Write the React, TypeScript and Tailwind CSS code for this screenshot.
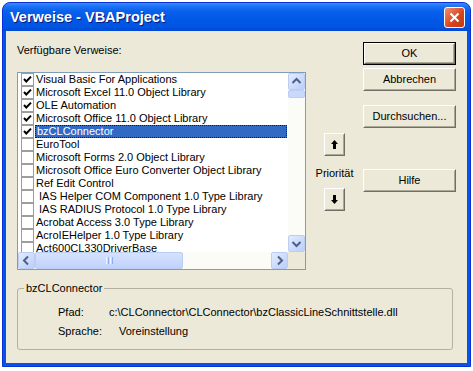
import type { ReactNode } from 'react';

const refs = [
  { label: 'Visual Basic For Applications', checked: true },
  { label: 'Microsoft Excel 11.0 Object Library', checked: true },
  { label: 'OLE Automation', checked: true },
  { label: 'Microsoft Office 11.0 Object Library', checked: true },
  { label: 'bzCLConnector', checked: true, selected: true },
  { label: 'EuroTool' },
  { label: 'Microsoft Forms 2.0 Object Library' },
  { label: 'Microsoft Office Euro Converter Object Library' },
  { label: 'Ref Edit Control' },
  { label: '\u00a0IAS Helper COM Component 1.0 Type Library' },
  { label: '\u00a0IAS RADIUS Protocol 1.0 Type Library' },
  { label: 'Acrobat Access 3.0 Type Library' },
  { label: 'AcroIEHelper 1.0 Type Library' },
  { label: 'Act600CL330DriverBase' },
];

function CheckBox({ checked }: { checked?: boolean }) {
  return (
    <span className="flex h-[13px] w-[13px] shrink-0 items-center justify-center border border-[#9D9D9D] bg-white">
      {checked && (
        <svg width="11" height="11" viewBox="0 0 11 11">
          <polyline points="2,5 4.3,7.5 9,2.6" fill="none" stroke="#000" strokeWidth="2" />
        </svg>
      )}
    </span>
  );
}

const arrows = {
  up: '4.5,10 8.5,6 12.5,10',
  down: '4.5,7 8.5,11 12.5,7',
  left: '10,4.5 6,8.5 10,12.5',
  right: '7,4.5 11,8.5 7,12.5',
};

function ScrollButton({ dir }: { dir: keyof typeof arrows }) {
  return (
    <div className="h-[17px] w-[17px] shrink-0 rounded-[2px] border border-[#BCCDF3] bg-[linear-gradient(135deg,#E3EBFF,#BACEFA)]">
      <svg width="15" height="15" viewBox="1 1 15 15">
        <polyline points={arrows[dir]} fill="none" stroke="#4D6185" strokeWidth="2" />
      </svg>
    </div>
  );
}

function Button({ children, isDefault }: { children: ReactNode; isDefault?: boolean }) {
  const face = (
    <div className="h-full border border-b-[#716F64] border-l-white border-r-[#716F64] border-t-white">
      <div className="flex h-full items-center justify-center border border-b-[#ACA899] border-l-[#ECE9D8] border-r-[#ACA899] border-t-[#ECE9D8]">
        {children}
      </div>
    </div>
  );
  return isDefault ? <div className="h-[23px] w-[93px] border border-black">{face}</div> : <div className="h-[23px] w-[93px]">{face}</div>;
}

function ArrowButton({ down }: { down?: boolean }) {
  return (
    <div className="h-[23px] w-[21px] border border-b-[#716F64] border-l-white border-r-[#716F64] border-t-white">
      <div className="flex h-full items-center justify-center border border-b-[#ACA899] border-l-[#ECE9D8] border-r-[#ACA899] border-t-[#ECE9D8]">
        <svg width="7" height="9" viewBox="0 0 7 9" className={down ? 'rotate-180' : ''}>
          <polygon points="3.5,0 7,4 5,4 5,9 2,9 2,4 0,4" fill="#000" />
        </svg>
      </div>
    </div>
  );
}

export default function App() {
  return (
    <div className="h-[371px] w-[473px] bg-white pl-[2px] pt-[2px] text-[11px] leading-[13px] text-black [font-family:'Liberation_Sans',Arial,sans-serif]">
      <div className="flex h-[365px] w-[469px] flex-col rounded-t-[8px] border border-[#0831D9] bg-[#0554E3]">
        {/* title bar */}
        <div className="flex h-[28px] shrink-0 items-center rounded-t-[7px] bg-[linear-gradient(to_bottom,#3A8EFB_0%,#1C72F4_12%,#0860EC_30%,#0058E7_60%,#0055E2_85%,#0049D4_100%)] pl-[7px] pr-[5px]">
          <span className="text-[14.5px] font-bold text-white [text-shadow:1px_1px_#0A1883]">Verweise - VBAProject</span>
          <div className="ml-auto flex h-[21px] w-[21px] items-center justify-center rounded-[3px] border border-white bg-[linear-gradient(135deg,#F0906E,#D8421B_60%,#C23A14)]">
            <svg width="11" height="11" viewBox="0 0 11 11">
              <path d="M1.5 1.5 L9.5 9.5 M9.5 1.5 L1.5 9.5" stroke="#fff" strokeWidth="2" />
            </svg>
          </div>
        </div>

        {/* client area */}
        <div className="mx-[3px] mb-[3px] flex flex-1 flex-col bg-[#ECE9D8] pl-[11px]">
          <div className="flex">
            <div className="w-[289px]">
              <div className="mt-[13px]">Verfügbare Verweise:</div>
              <div className="mt-[15px] flex h-[198px] flex-col border border-[#7F9DB9] bg-white">
                <div className="flex min-h-0 flex-1">
                  <div className="flex-1 overflow-hidden">
                    {refs.map((r) => (
                      <div key={r.label} className="flex h-[13px] items-center pl-[3px] pr-[1px]">
                        <CheckBox checked={r.checked} />
                        <span
                          className={`ml-[1px] flex h-[13px] flex-1 items-center whitespace-nowrap pl-[1px] ${
                            r.selected ? 'border border-dotted border-[#1A1A1A] bg-[#316AC5] text-white' : ''
                          }`}
                        >
                          {r.label}
                        </span>
                      </div>
                    ))}
                  </div>
                  <div className="flex w-[17px] flex-col bg-[#FBFBF8]">
                    <ScrollButton dir="up" />
                    <div className="h-[8px] rounded-[2px] border border-[#BCCDF3] bg-[#C9D8FC]" />
                    <div className="flex-1" />
                    <ScrollButton dir="down" />
                  </div>
                </div>
                <div className="flex h-[17px] bg-[#FBFBF8]">
                  <ScrollButton dir="left" />
                  <div className="flex w-[148px] items-center justify-center rounded-[2px] border border-[#BCCDF3] bg-[linear-gradient(to_bottom,#D6E2FE,#C0D2FB)]">
                    <div className="flex gap-[1px]">
                      <span className="h-[7px] w-[1px] bg-[#EEF4FE]" />
                      <span className="h-[7px] w-[1px] bg-[#8CB0F8]" />
                      <span className="h-[7px] w-[1px] bg-[#EEF4FE]" />
                      <span className="h-[7px] w-[1px] bg-[#8CB0F8]" />
                    </div>
                  </div>
                  <div className="flex-1" />
                  <ScrollButton dir="right" />
                  <div className="w-[17px] bg-[#ECE9D8]" />
                </div>
              </div>
            </div>

            <div className="flex w-[57px] flex-col items-center">
              <div className="mt-[102px]">
                <ArrowButton />
              </div>
              <div className="mt-[11px] h-[13px]">Priorität</div>
              <div className="mt-[8px]">
                <ArrowButton down />
              </div>
            </div>

            <div className="flex w-[93px] flex-col">
              <div className="mt-[11px]">
                <Button isDefault>OK</Button>
              </div>
              <div className="mt-[3px]">
                <Button>Abbrechen</Button>
              </div>
              <div className="mt-[14px]">
                <Button>Durchsuchen...</Button>
              </div>
              <div className="mt-[41px]">
                <Button>Hilfe</Button>
              </div>
            </div>
          </div>

          <fieldset className="mt-[12px] w-[436px] rounded-[3px] border border-[#B4B1A3] pb-[11px]">
            <legend className="ml-[6px] px-[2px] leading-[13px]">bzCLConnector</legend>
            <div className="pl-[40px]">
              <div className="mt-[11px] flex h-[13px]">
                <span className="w-[51px]">Pfad:</span>
                <span>c:\CLConnector\CLConnector\bzClassicLineSchnittstelle.dll</span>
              </div>
              <div className="mt-[6px] flex h-[13px]">
                <span className="w-[61px]">Sprache:</span>
                <span>Voreinstellung</span>
              </div>
            </div>
          </fieldset>
        </div>
      </div>
    </div>
  );
}
